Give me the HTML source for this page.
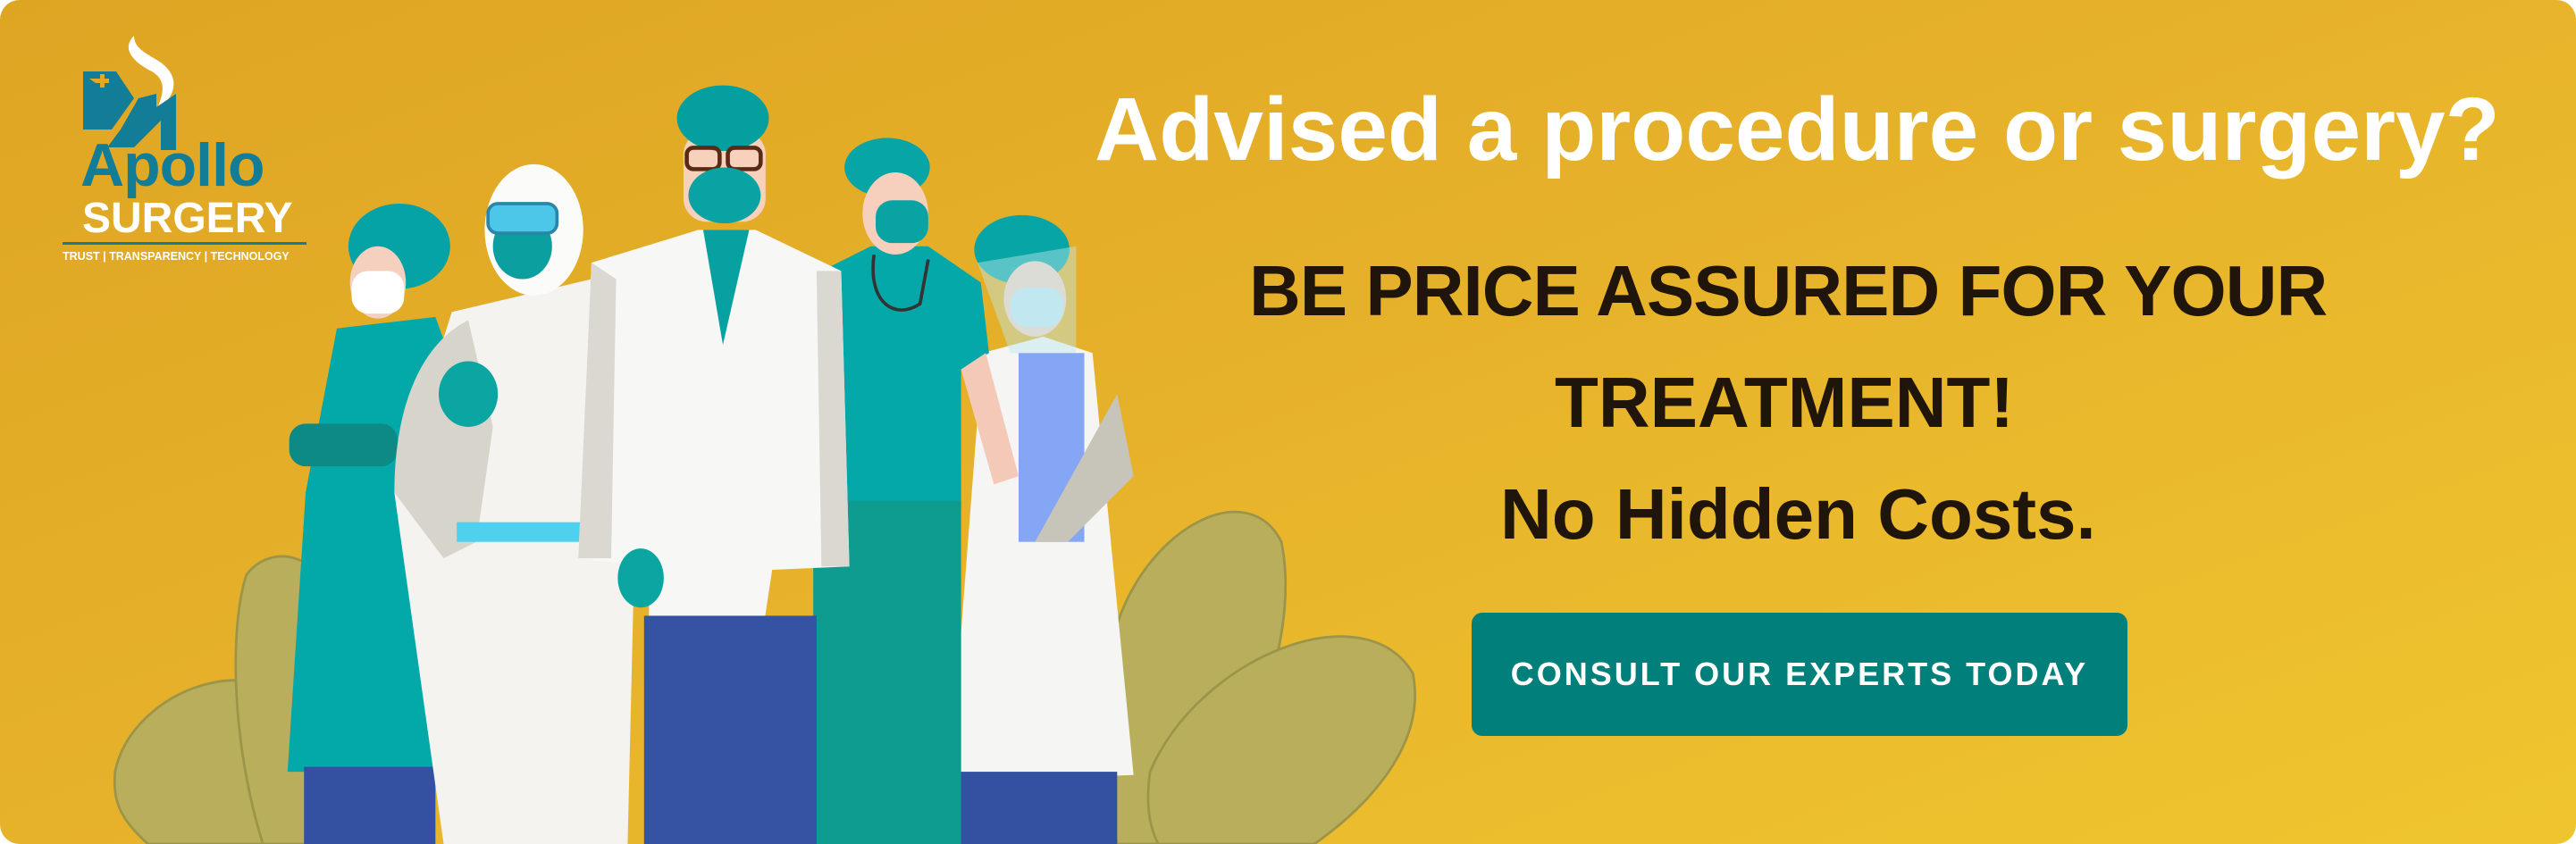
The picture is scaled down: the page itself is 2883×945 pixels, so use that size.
<!DOCTYPE html>
<html><head><meta charset="utf-8"><style>
html,body{margin:0;padding:0;background:#fff}
.card{position:relative;width:2883px;height:945px;border-radius:22px;overflow:hidden;
background:linear-gradient(160deg,#dea523 0%,#e6b12a 45%,#efc52f 100%);font-family:"Liberation Sans",sans-serif}
.t{position:absolute;white-space:nowrap;font-weight:bold;transform-origin:left top}
.btn{position:absolute;left:1647px;top:686px;width:734px;height:138px;background:#01807b;border-radius:12px;color:#fff;font-size:36px;font-weight:bold;letter-spacing:3px;text-align:center;line-height:138px}
svg{position:absolute;left:0;top:0}
</style></head><body><div class="card">
<svg width="2883" height="945" viewBox="0 0 1568 514">
<g fill="#b8ae5b" stroke="#9c9448" stroke-width="1.5">
<path d="M70 470 C80 420 160 390 190 440 C210 480 200 514 190 514 L90 514 C75 500 68 490 70 470Z"/>
<path d="M150 350 C165 330 200 335 205 380 L200 514 L160 514 C140 450 140 380 150 350Z"/>
<path d="M680 380 C700 320 760 290 780 330 C790 380 770 450 720 514 L680 514 C670 470 672 420 680 380Z"/>
<path d="M700 470 C730 400 830 360 860 410 C870 460 820 500 800 514 L705 514 C698 500 698 485 700 470Z"/>
</g>
<ellipse cx="243" cy="150" rx="31" ry="26" fill="#05a3a6"/>
<ellipse cx="230" cy="172" rx="17" ry="22" fill="#f6d0be"/>
<rect x="214" y="165" width="32" height="26" rx="10" fill="#fff"/>
<path d="M205 200 L265 193 L282 240 L272 470 L175 470 L186 300Z" fill="#03a9a9"/>
<rect x="176" y="258" width="66" height="26" rx="10" fill="#0d8a85"/>
<rect x="185" y="467" width="80" height="47" fill="#3451a1"/>
<path d="M275 190 L360 170 L388 260 L382 514 L270 514 L240 300Z" fill="#f4f3f0"/>
<path d="M240 300 C240 250 255 210 285 195 L300 260 L290 330 L270 340Z" fill="#d7d4cc"/>
<ellipse cx="325" cy="140" rx="30" ry="40" fill="#fbfbfa"/>
<ellipse cx="318" cy="150" rx="18" ry="20" fill="#0b9fa0"/>
<rect x="297" y="124" width="42" height="18" rx="6" fill="#4cc7ea" stroke="#2a85a8" stroke-width="2"/>
<rect x="278" y="318" width="78" height="12" fill="#4fd0ee"/>
<ellipse cx="285" cy="240" rx="18" ry="20" fill="#0ba5a2"/>
<path d="M598 215 L635 205 L665 215 L690 472 L578 476Z" fill="#f5f5f3"/>
<rect x="620" y="215" width="40" height="115" fill="#85a6f4"/>
<path d="M630 330 L680 240 L690 290 L650 330Z" fill="#c7c4ba"/>
<rect x="582" y="470" width="98" height="44" fill="#3451a1"/>
<ellipse cx="622" cy="152" rx="29" ry="21" fill="#08a5a6"/>
<ellipse cx="630" cy="182" rx="19" ry="23" fill="#f3d2c3"/>
<rect x="615" y="175" width="32" height="24" rx="10" fill="#c3e6f2"/>
<path d="M595 160 L655 150 L655 215 L615 215Z" fill="#bfe8ee" opacity=".45"/>
<path d="M500 165 L530 150 L565 150 L597 172 L602 215 L585 225 L585 310 L505 310Z" fill="#05a8a8"/>
<path d="M585 225 L600 215 L620 290 L605 295Z" fill="#f4c9b8"/>
<rect x="495" y="305" width="90" height="209" fill="#0e9b90"/>
<ellipse cx="540" cy="102" rx="26" ry="18" fill="#08a5a6"/>
<ellipse cx="545" cy="130" rx="20" ry="25" fill="#f6d0bd"/>
<rect x="533" y="122" width="32" height="26" rx="10" fill="#0aa3a4"/>
<path d="M532 155 C528 185 545 195 560 185 L565 158" fill="none" stroke="#333" stroke-width="2"/>
<path d="M360 160 L425 140 L460 140 L512 165 L517 345 L470 347 L465 380 L395 380 L395 345 L352 340Z" fill="#f7f7f5"/>
<path d="M497 165 L512 165 L517 345 L500 345Z" fill="#dad8d0"/>
<path d="M352 340 L360 160 L375 170 L372 340Z" fill="#dad8d0"/>
<path d="M428 140 L440 210 L456 140Z" fill="#07a1a2"/>
<rect x="392" y="375" width="105" height="139" fill="#3552a3"/>
<ellipse cx="390" cy="352" rx="14" ry="18" fill="#0ba5a2"/>
<rect x="416" y="80" width="50" height="55" rx="14" fill="#f7d1bb"/>
<ellipse cx="440" cy="72" rx="28" ry="20" fill="#069fa0"/>
<rect x="418" y="90" width="20" height="13" rx="4" fill="none" stroke="#5a2a15" stroke-width="2.5"/>
<rect x="443" y="90" width="20" height="13" rx="4" fill="none" stroke="#5a2a15" stroke-width="2.5"/>
<ellipse cx="441" cy="119" rx="22" ry="17" fill="#0aa3a4"/>
</svg>
<svg width="2883" height="945" viewBox="0 0 2883 945">
<path d="M150 40 C135 55 150 70 170 80 C190 92 180 110 175 125 C200 105 200 85 180 70 C165 60 150 55 150 40Z" fill="#fff"/>
<path d="M93 80 L130 80 L150 110 L125 145 L93 145Z" fill="#137c97"/>
<path d="M155 110 L175 105 L175 120 L197 105 L197 168 L180 168 L180 135 L150 165 L120 165 L135 145Z" fill="#137c97"/>
<path d="M100 88 h12 v-5 h5 v5 h5 v5 h-5 v5 h-5 v-5 h-5Z" fill="#e2a925"/>
</svg>
<div class="t" style="left:90px;top:146px;font-size:68px;color:#137c97;letter-spacing:-1px">Apollo</div>
<div class="t" style="left:92px;top:217px;font-size:48px;color:#fff;letter-spacing:0px">SURGERY</div>
<div style="position:absolute;left:70px;top:271px;width:273px;height:3px;background:#137c97"></div>
<div class="t" style="left:70px;top:280px;font-size:12.5px;color:#fff">TRUST | TRANSPARENCY | TECHNOLOGY</div>
<div class="t" style="left:1225px;top:88px;font-size:100px;color:#fff">Advised a procedure or surgery?</div>
<div class="t" style="left:1398px;top:280px;font-size:80px;color:#1f150b;letter-spacing:-1px">BE PRICE ASSURED FOR YOUR</div>
<div class="t" style="left:1740px;top:405px;font-size:80px;color:#1f150b;letter-spacing:0px">TREATMENT!</div>
<div class="t" style="left:1679px;top:530px;font-size:80px;color:#1f150b;letter-spacing:0px">No Hidden Costs.</div>
<div class="btn">CONSULT OUR EXPERTS TODAY</div>
</div></body></html>
